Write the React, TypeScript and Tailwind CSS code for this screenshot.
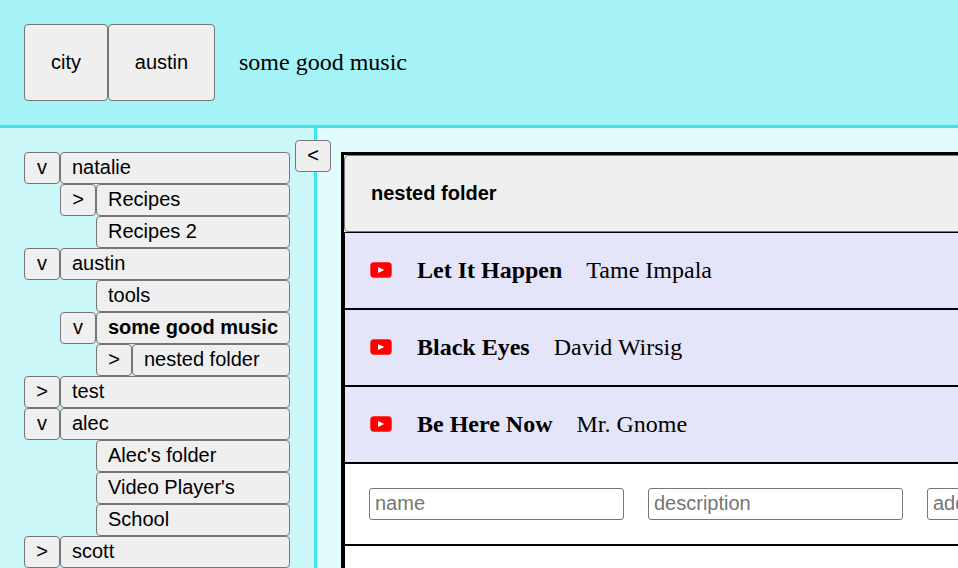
import React from 'react';

type Folder = { name: string; depth: number; toggle?: string; active?: boolean };

const folders: Folder[] = [
  { name: 'natalie', depth: 0, toggle: 'v' },
  { name: 'Recipes', depth: 1, toggle: '>' },
  { name: 'Recipes 2', depth: 1 },
  { name: 'austin', depth: 0, toggle: 'v' },
  { name: 'tools', depth: 1 },
  { name: 'some good music', depth: 1, toggle: 'v', active: true },
  { name: 'nested folder', depth: 2, toggle: '>' },
  { name: 'test', depth: 0, toggle: '>' },
  { name: 'alec', depth: 0, toggle: 'v' },
  { name: "Alec's folder", depth: 1 },
  { name: "Video Player's", depth: 1 },
  { name: 'School', depth: 1 },
  { name: 'scott', depth: 0, toggle: '>' },
];

const songs = [
  { title: 'Let It Happen', artist: 'Tame Impala' },
  { title: 'Black Eyes', artist: 'David Wirsig' },
  { title: 'Be Here Now', artist: 'Mr. Gnome' },
];

const button =
  "shrink-0 whitespace-nowrap rounded-[4px] border border-[#767676] bg-[#efefef] font-['Liberation_Sans',Arial,sans-serif] text-[20px] leading-[23px] text-black";
const indents = ['w-0', 'w-9', 'w-18'];

function VideoIcon() {
  return (
    <svg className="mb-[2px] block h-4 w-[22px] shrink-0" viewBox="0 0 22 16">
      <rect x="0.3" y="0.3" width="21.4" height="15.4" rx="3.6" fill="#ff0000" />
      <path d="M8 4.9 14.2 8 8 11.1Z" fill="#fff" />
    </svg>
  );
}

function FolderRow({ name, depth, toggle, active }: Folder) {
  return (
    <div className="flex h-8">
      <div className={`shrink-0 ${indents[depth]}`} />
      {toggle ? (
        <button className={`${button} w-9 pb-[2px] text-center`}>{toggle}</button>
      ) : (
        <div className="w-9 shrink-0" />
      )}
      <button className={`${button} grow pb-[2px] pl-[11px] text-left ${active ? 'font-bold' : ''}`}>{name}</button>
    </div>
  );
}

function Field({ placeholder }: { placeholder: string }) {
  return (
    <input
      placeholder={placeholder}
      className="h-8 w-[255px] shrink-0 rounded-[3px] border border-[#767676] bg-white px-[5px] pb-[2px] font-['Liberation_Sans',Arial,sans-serif] text-[20px] leading-[23px] placeholder:text-[#757575]"
    />
  );
}

export default function App() {
  return (
    <div className="flex h-[568px] w-[958px] flex-col overflow-hidden bg-[#e1fbfd] font-['Liberation_Serif','Times_New_Roman',serif] text-[24px] leading-[27px] text-black">
      <header className="flex h-32 shrink-0 items-center border-b-[3px] border-[#3ce4ec] bg-[#a5f3f7] pl-6">
        <button className={`${button} h-[77px] w-[84px]`}>city</button>
        <button className={`${button} h-[77px] w-[107px]`}>austin</button>
        <span className="ml-6">some good music</span>
      </header>
      <div className="flex min-h-0 grow">
        <aside className="relative w-[317px] shrink-0 border-r-[3px] border-[#3ce4ec] bg-[#cbf7f9] pt-6 pr-6 pl-6">
          {folders.map((folder) => (
            <FolderRow key={folder.name} {...folder} />
          ))}
          <button className={`${button} absolute top-3 -right-[17px] h-8 w-9 pb-[2px]`}>&lt;</button>
        </aside>
        <main className="min-w-0 grow overflow-hidden pt-6 pl-6">
          <div className="flex h-[600px] w-[900px] flex-col border-t-[3px] border-l-[3px] border-black bg-white">
            <button className={`${button} h-[77px] pl-[26px] text-left font-bold`}>nested folder</button>
            <div className="flex grow flex-col border-t border-l border-black">
              {songs.map((song) => (
                <div
                  key={song.title}
                  className="flex h-[77px] shrink-0 items-center border-b-2 border-black bg-[#e5e5f9] pl-[25px]"
                >
                  <VideoIcon />
                  <span className="ml-[25px] font-bold">{song.title}</span>
                  <span className="ml-6">{song.artist}</span>
                </div>
              ))}
              <div className="flex h-[82px] shrink-0 items-center gap-6 border-b-2 border-black pl-6">
                <Field placeholder="name" />
                <Field placeholder="description" />
                <Field placeholder="address" />
              </div>
            </div>
          </div>
        </main>
      </div>
    </div>
  );
}
